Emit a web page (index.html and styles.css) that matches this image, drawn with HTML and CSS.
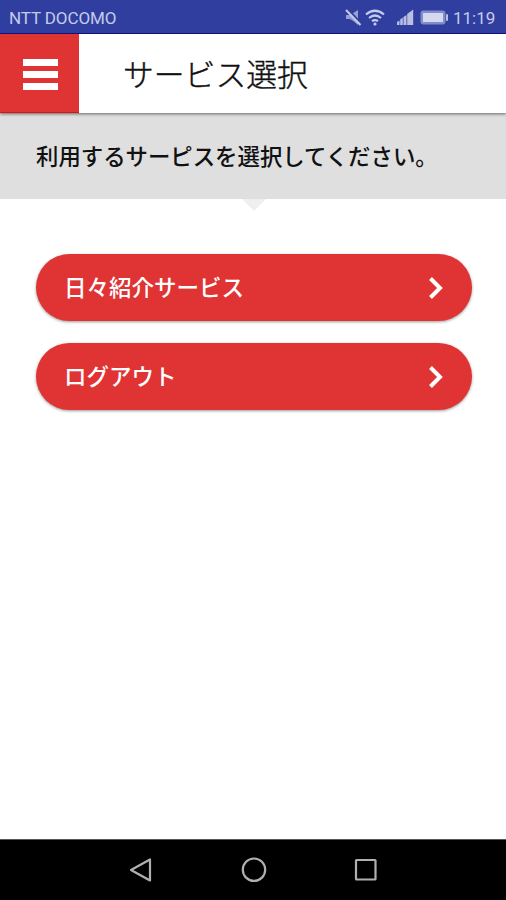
FILE: index.html
```html
<!DOCTYPE html>
<html lang="ja">
<head>
<meta charset="utf-8">
<title>サービス選択</title>
<link rel="stylesheet" href="styles.css">
</head>
<body>
<div class="status">
  <span class="carrier">NTT DOCOMO</span>
  <svg class="status-icons" width="104" height="20" viewBox="0 0 104 20">
    <g fill="#b9c0e4">
      <path d="M1 7h4l8-5v15l-4-3.500-4-2.500H1z" opacity=".75"/>
      <path d="M52 17v-3l2.500-1.500V17zM55.200 17v-5.500l2.600-2V17zM58.500 17V9l3-2v10zM62.200 17V6l6-4.500V17z"/>
      <rect x="75.500" y="2.500" width="25" height="14" rx="3" opacity=".6"/>
      <rect x="78" y="5" width="20" height="9" fill="#d5d9f0"/>
      <rect x="101" y="6" width="2" height="7" rx="1"/>
    </g>
    <path d="M2 1l14 15" stroke="#303f9f" stroke-width="3"/>
    <path d="M1 2l14.500 15" stroke="#c5cbea" stroke-width="2"/>
    <g fill="none" stroke="#c5cbea" stroke-width="2.200">
      <path d="M21 6.500q9-7.500 18 0M24 10q6-5 12 0M27 13.200q3-2.200 6 0"/>
    </g>
    <circle cx="30" cy="16" r="1.600" fill="#c5cbea"/>
  </svg>
  <span class="clock">11:19</span>
</div>
<header class="header">
  <div class="menu"><i></i><i></i><i></i></div>
  <h1 class="title">サービス選択</h1>
</header>
<p class="notice">利用するサーピスを選択してください。</p>
<main class="services">
  <a class="service">日々紹介サービス<svg width="16" height="24" viewBox="0 0 16 24"><path d="M2.500 2.500 12 12l-9.500 9.500"/></svg></a>
  <a class="service">ログアウト<svg width="16" height="24" viewBox="0 0 16 24"><path d="M2.500 2.500 12 12l-9.500 9.500"/></svg></a>
</main>
<nav class="navbar">
  <svg width="26" height="26" viewBox="0 0 26 26"><path d="M3 13 22 2.500v21z"/></svg>
  <svg width="26" height="26" viewBox="0 0 26 26"><circle cx="13" cy="12.700" r="11.200"/></svg>
  <svg width="26" height="26" viewBox="0 0 26 26"><rect x="3" y="3" width="19.500" height="19.500" rx=".5"/></svg>
</nav>
</body>
</html>
```
FILE: styles.css
```css
* { box-sizing: border-box; }
body {
  margin: 0;
  height: 900px;
  display: flex;
  flex-direction: column;
  overflow: hidden;
  background: #fff;
  color: #111;
  font-family: "Noto Sans CJK JP", sans-serif;
}
.status {
  height: 34px;
  flex: none;
  display: flex;
  align-items: center;
  padding: 2px 11px 0 9px;
  background: #303f9f;
  border-bottom: 1px solid #14148f;
  color: #c5cbea;
  font: 17px Roboto, sans-serif;
}
.carrier { flex: 1; letter-spacing: -.1px; }
.status-icons { margin-right: 4px; }
.clock { width: 42px; font-size: 17px; text-align: right; }
.header {
  height: 79px;
  flex: none;
  display: flex;
  align-items: center;
  position: relative;
  background: #fff;
  box-shadow: 0 1px 3px rgba(0, 0, 0, .55);
}
.menu {
  width: 79px;
  height: 79px;
  display: flex;
  flex-direction: column;
  align-items: center;
  justify-content: center;
  gap: 5px;
  padding: 2px 0 0 2px;
  background: #e03334;
  border-bottom: 1px solid #d81414;
}
.menu i { width: 35px; height: 7px; background: #fff; }
.title {
  margin: 0 0 0 44px;
  padding-bottom: 1px;
  font-size: 30.800px;
  font-weight: 300;
  line-height: 76px;
  -webkit-text-stroke: .4px #111;
}
.notice {
  height: 86px;
  flex: none;
  margin: 0;
  padding-left: 36px;
  position: relative;
  z-index: -1;
  background: #dfdfdf;
  font-size: 22.400px;
  font-weight: 500;
  line-height: 85px;
}
.notice::after {
  content: "";
  position: absolute;
  top: 100%;
  left: 242px;
  border: 12px solid transparent;
  border-top-color: #efefef;
  border-bottom: 0;
}
.services {
  flex: 1;
  display: flex;
  flex-direction: column;
  gap: 22px;
  padding: 55px 34px 0 36px;
}
.service {
  height: 67px;
  display: flex;
  align-items: flex-start;
  justify-content: space-between;
  padding: 0 28px;
  border-radius: 34px;
  background: #e03334;
  box-shadow: 0 1px 3px rgba(0, 0, 0, .4);
  color: #fff;
  font-size: 22.500px;
  font-weight: 500;
  line-height: 65px;
}
.service svg { margin-top: 22px; }
.service path { fill: none; stroke: #fff; stroke-width: 4; }
.navbar {
  height: 61px;
  flex: none;
  display: flex;
  justify-content: center;
  align-items: center;
  gap: 86.500px;
  padding-left: 1px;
  background: #000;
  border-top: 1px solid #555;
}
.navbar svg { fill: none; stroke: #b0b0b0; stroke-width: 2.200; stroke-linejoin: round; }
```
